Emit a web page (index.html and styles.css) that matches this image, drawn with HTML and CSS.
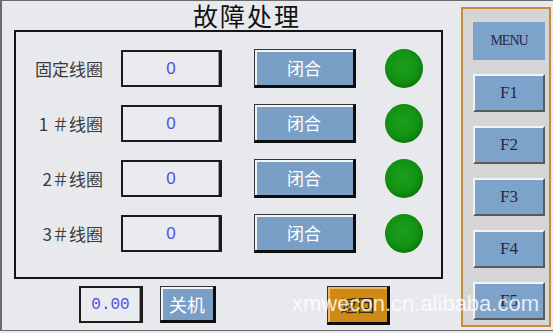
FILE: index.html
```html
<!DOCTYPE html>
<html>
<head>
    <meta charset="utf-8">
    <title>故障处理</title>
    <link rel="stylesheet" href="styles.css">
</head>
<body>
    <div class="screen">
        <div class="left">
            <div class="title">故障处理</div>
            <div class="panel">
                <div class="row">
                    <div class="label">固定线圈</div>
                    <div class="value">0</div>
                    <div class="btn close">闭合</div>
                    <div class="lamp"></div>
                </div>
                <div class="row">
                    <div class="label">1 ＃线圈</div>
                    <div class="value">0</div>
                    <div class="btn close">闭合</div>
                    <div class="lamp"></div>
                </div>
                <div class="row">
                    <div class="label">2＃线圈</div>
                    <div class="value">0</div>
                    <div class="btn close">闭合</div>
                    <div class="lamp"></div>
                </div>
                <div class="row">
                    <div class="label">3＃线圈</div>
                    <div class="value">0</div>
                    <div class="btn close">闭合</div>
                    <div class="lamp"></div>
                </div>
            </div>
            <div class="bottom">
                <div class="value small">0.00</div>
                <div class="btn off">关机</div>
                <div class="btn back">返回</div>
            </div>
        </div>
        <div class="menu">
            <div class="menu-head">MENU</div>
            <div class="fkey">F1</div>
            <div class="fkey">F2</div>
            <div class="fkey">F3</div>
            <div class="fkey">F4</div>
            <div class="fkey">F5</div>
        </div>
        <div class="watermark">xmwecon.cn.alibaba.com</div>
    </div>
</body>
</html>
```

FILE: styles.css
```css
body {
    margin: 0;
    background-color: #e7e9ec;
    font-family: "Noto Sans CJK SC", "Liberation Sans", sans-serif;
}
.screen {
    position: relative;
    display: flex;
    width: 553px;
    height: 331px;
    box-sizing: border-box;
    border: 1px solid #6b6b6b;
    border-left-width: 2px;
    border-right: none;
    background-color: #e7e9ec;
    overflow: hidden;
}
.left {
    width: 459px;
}
.title {
    height: 29px;
    padding-left: 191px;
    font-size: 25px;
    line-height: 28px;
    letter-spacing: 2px;
    color: #111;
}
.panel {
    margin-left: 12px;
    width: 429px;
    height: 249px;
    box-sizing: border-box;
    border: 2px solid #151515;
    padding-top: 17px;
    display: flex;
    flex-direction: column;
    gap: 16px;
}
.row {
    display: flex;
    align-items: center;
    height: 39px;
}
.label {
    width: 87px;
    text-align: right;
    font-size: 17px;
    color: #3a3a3a;
    white-space: pre;
}
.value {
    margin-left: 18px;
    width: 101px;
    height: 37px;
    box-sizing: border-box;
    border: 2px solid #1b1b1b;
    border-right-width: 3px;
    box-shadow: inset -1px 0 0 #9a9a9a;
    background-color: #e9ebee;
    display: flex;
    align-items: center;
    justify-content: center;
    font-family: "Liberation Sans", sans-serif;
    font-size: 17px;
    color: #5050e0;
}
.btn {
    display: flex;
    align-items: center;
    justify-content: center;
    box-sizing: border-box;
    border: 1px solid #333;
    border-right: 3px solid #0e0e0e;
    border-bottom: 3px solid #0e0e0e;
    box-shadow: inset 2px 2px 0 #f2f4f6;
    background-color: #7a9fc7;
    font-size: 17px;
    color: #fff;
}
.close {
    margin-left: 32px;
    width: 102px;
    height: 39px;
}
.lamp {
    margin-left: 29px;
    width: 38px;
    height: 39px;
    border-radius: 50%;
    background: radial-gradient(circle at 46% 44%, #1c9e1c 0, #139313 50%, #0c7f0c 68%, #096a09 84%, #075507 100%);
}
.bottom {
    display: flex;
    align-items: flex-start;
    margin-top: 7px;
    padding-left: 77px;
}
.small {
    margin-left: 0;
    width: 64px;
    height: 37px;
    font-family: "Liberation Mono", monospace;
    font-size: 16px;
}
.off {
    margin-left: 17px;
    width: 56px;
    height: 37px;
    font-size: 18px;
}
.back {
    margin-left: 111px;
    width: 63px;
    height: 39px;
    background-color: #cf8a13;
    box-shadow: inset 2px 2px 0 #e8b868;
    color: #3b2a0c;
}
.menu {
    margin-top: 6px;
    width: 90px;
    height: 320px;
    box-sizing: border-box;
    border: 2px solid #c48d3a;
    background-color: #d5d5d5;
    padding: 13px 4px 0 10px;
    display: flex;
    flex-direction: column;
    gap: 14px;
}
.menu-head, .fkey {
    height: 38px;
    box-sizing: border-box;
    display: flex;
    align-items: center;
    justify-content: center;
    background-color: #7ea3ca;
    font-family: "Liberation Serif", serif;
    color: #1e2a44;
}
.menu-head {
    font-size: 14px;
    letter-spacing: -1px;
}
.fkey {
    border: 2px solid #f3f3f3;
    border-right-color: #5a5a5a;
    border-bottom-color: #5a5a5a;
    font-size: 17px;
}
.watermark {
    position: absolute;
    left: 290px;
    top: 290px;
    font-family: "Liberation Sans", sans-serif;
    font-size: 22px;
    color: rgba(255, 255, 255, 0.82);
    white-space: nowrap;
}
```
